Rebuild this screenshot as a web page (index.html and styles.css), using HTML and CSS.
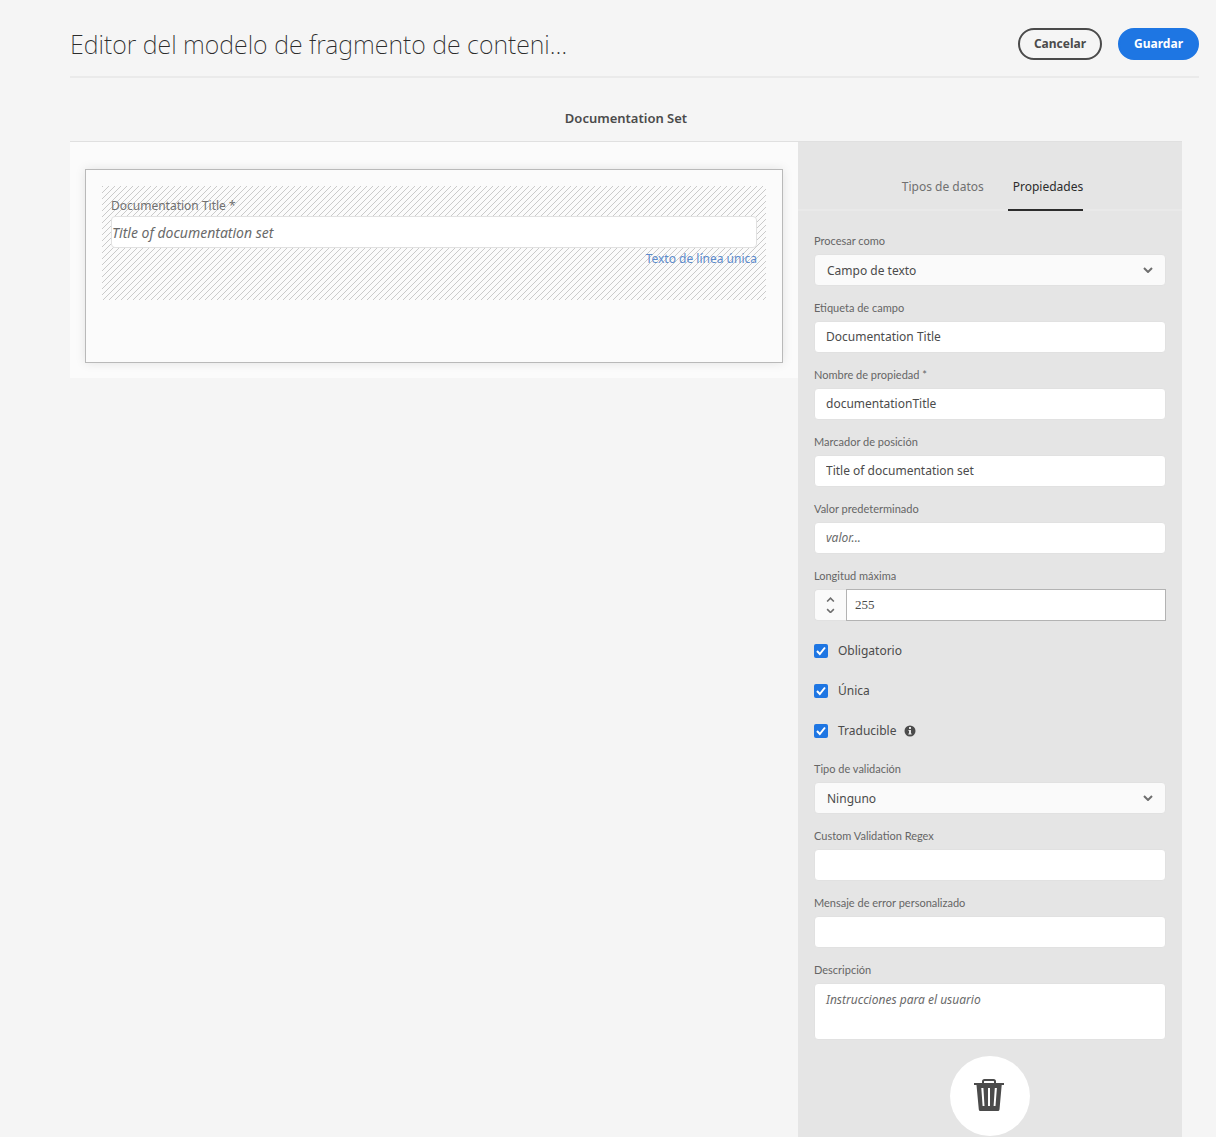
FILE: index.html
```html
<!DOCTYPE html>
<html lang="es">
<head>
<meta charset="utf-8">
<meta name="viewport" content="width=device-width, initial-scale=1">
<title>Editor del modelo de fragmento de contenido</title>
<link rel="stylesheet" href="styles.css">
</head>
<body>
<header class="topbar">
  <h1 class="topbar-title">Editor del modelo de fragmento de conteni…</h1>
  <div class="topbar-actions">
    <button class="btn btn-outline" type="button">Cancelar</button>
    <button class="btn btn-primary" type="submit" form="properties">Guardar</button>
  </div>
</header>
<main class="editor">
  <h2 class="model-name">Documentation Set</h2>
  <div class="columns">
    <section class="preview">
      <div class="dropzone">
        <div class="model-field">
          <label class="model-label" for="preview-title">Documentation Title *</label>
          <input class="model-input" id="preview-title" type="text" placeholder="Title of documentation set">
          <a class="model-type" href="#properties">Texto de línea única</a>
        </div>
      </div>
    </section>
    <aside class="panel">
      <div class="tabs" role="tablist">
        <button class="tab" type="button" role="tab" aria-selected="false">Tipos de datos</button>
        <button class="tab tab-active" type="button" role="tab" aria-selected="true">Propiedades</button>
      </div>
      <form class="properties" id="properties">
        <div class="field">
          <label for="render-as">Procesar como</label>
          <div class="select-box">
            <select class="control select" id="render-as"><option>Campo de texto</option></select>
            <svg class="chevron" viewBox="0 0 10 6" aria-hidden="true"><path d="M1 1l4 4 4-4"/></svg>
          </div>
        </div>
        <div class="field">
          <label for="field-label">Etiqueta de campo</label>
          <input class="control" id="field-label" type="text" value="Documentation Title">
        </div>
        <div class="field">
          <label for="property-name">Nombre de propiedad *</label>
          <input class="control" id="property-name" type="text" value="documentationTitle">
        </div>
        <div class="field">
          <label for="placeholder">Marcador de posición</label>
          <input class="control" id="placeholder" type="text" value="Title of documentation set">
        </div>
        <div class="field">
          <label for="default-value">Valor predeterminado</label>
          <input class="control" id="default-value" type="text" placeholder="valor...">
        </div>
        <div class="field">
          <label for="max-length">Longitud máxima</label>
          <div class="stepper">
            <div class="stepper-buttons">
              <button class="step" type="button" aria-label="Aumentar"><svg viewBox="0 0 8 5" aria-hidden="true"><path d="M1 4l3-3 3 3"/></svg></button>
              <button class="step" type="button" aria-label="Reducir"><svg viewBox="0 0 8 5" aria-hidden="true"><path d="M1 1l3 3 3-3"/></svg></button>
            </div>
            <input class="stepper-input" id="max-length" type="number" value="255">
          </div>
        </div>
        <div class="checks">
          <label class="check"><input type="checkbox" checked>Obligatorio</label>
          <label class="check"><input type="checkbox" checked>Única</label>
          <div class="check">
            <label class="check"><input type="checkbox" checked>Traducible</label>
            <svg class="info" viewBox="0 0 12 12" aria-hidden="true"><circle cx="6" cy="6" r="5.5"/><path d="M5 2h2v2H5zM4.500 5H7v3.500h.7v1H4.300v-1H5V6h-.5z"/></svg>
          </div>
        </div>
        <div class="field">
          <label for="validation-type">Tipo de validación</label>
          <div class="select-box">
            <select class="control select" id="validation-type"><option>Ninguno</option></select>
            <svg class="chevron" viewBox="0 0 10 6" aria-hidden="true"><path d="M1 1l4 4 4-4"/></svg>
          </div>
        </div>
        <div class="field">
          <label for="regex">Custom Validation Regex</label>
          <input class="control" id="regex" type="text">
        </div>
        <div class="field">
          <label for="error-message">Mensaje de error personalizado</label>
          <input class="control" id="error-message" type="text">
        </div>
        <div class="field">
          <label for="description">Descripción</label>
          <textarea class="control textarea" id="description" placeholder="Instrucciones para el usuario"></textarea>
        </div>
        <button class="delete" type="button" aria-label="Eliminar">
          <svg viewBox="0 0 30 32" aria-hidden="true"><path class="trash-handle" d="M9 4V2.500Q9 1 10.500 1h9Q21 1 21 2.500V4"/><path class="trash-can" fill-rule="evenodd" d="M0 4h30v2h-2.300l-2.200 24.500Q25.300 32 24 32H6.200Q5 32 4.800 30.500L2.500 6H0zM7.300 9l1.300 18h1.900L9.400 9zM14 9v18h2V9zM20.800 9l-1.200 18h1.900l1.400-18z"/></svg>
        </button>
      </form>
    </aside>
  </div>
</main>
</body>
</html>
```
FILE: styles.css
```css
* { box-sizing: border-box; }

body {
  display: flex;
  flex-direction: column;
  min-height: 100vh;
  margin: 0;
  background: #f5f5f5;
  color: #4b4b4b;
  font: 13px/20px "Noto Sans", "Open Sans", sans-serif;
}

button, input, select, textarea {
  margin: 0;
  font: inherit;
  color: inherit;
}

button { cursor: pointer; }

.topbar {
  display: flex;
  justify-content: space-between;
  align-items: center;
  gap: 16px;
  margin: 0 17px 0 70px;
  padding: 24px 0 12px;
  border-bottom: 2px solid #eaeaea;
}

.topbar-title {
  min-width: 0;
  margin: 0;
  color: #2c2c2c;
  font-size: 25px;
  font-weight: 200;
  line-height: 40px;
}

.topbar-actions {
  display: flex;
  flex-shrink: 0;
  gap: 16px;
}

.btn {
  height: 32px;
  padding: 0 14px;
  border: 2px solid #4b4b4b;
  border-radius: 16px;
  background: none;
  font-size: 12px;
  font-weight: 700;
}

.btn-primary {
  border-color: #1e76e3;
  background: #1e76e3;
  color: #fff;
}

.editor {
  display: flex;
  flex: 1;
  flex-direction: column;
  margin: 16px 34px 0 70px;
}

.model-name {
  margin: 0;
  padding: 14px 0 13px;
  border-bottom: 1px solid #e0e0e0;
  font-size: 13px;
  font-weight: 600;
  line-height: 20px;
  text-align: center;
}

.columns {
  display: grid;
  flex: 1;
  grid-template-columns: minmax(0, 1fr) 384px;
}

.preview {
  align-self: start;
  padding: 27px 15px 15px;
  background: #fbfbfb;
}

.dropzone {
  padding: 16px 16px 62px;
  border: 1px solid #b9b9b9;
  box-shadow: 0 0 10px rgba(0, 0, 0, 0.1);
}

.model-field {
  display: flex;
  flex-direction: column;
  padding: 10px 9px 31px;
  background: linear-gradient(135deg, transparent 46%, #cacaca 46%, #cacaca 54%, transparent 54%) 1px 0 / 6px 6px;
}

.model-label {
  color: #707070;
  font-size: 12px;
}

.model-input {
  width: 100%;
  height: 32px;
  padding: 0;
  border: 1px solid #e1e1e1;
  border-radius: 4px;
  background: #fff;
  font-size: 14px;
}

.model-type {
  align-self: flex-end;
  margin-top: 1px;
  color: #5c8acb;
  font-size: 12px;
  text-decoration: none;
}

::placeholder {
  color: #6a6a6a;
  font-style: italic;
  opacity: 1;
}

.panel { background: #e5e5e5; }

.tabs {
  display: flex;
  justify-content: center;
  gap: 24px;
  padding: 22px 0 0 5px;
  box-shadow: inset 0 -2px #e9e9e9;
}

.tab {
  padding: 13px 0 12px;
  border: 0;
  border-bottom: 2px solid transparent;
  background: none;
  color: #707070;
  font-size: 12px;
}

.tab-active {
  padding-left: 5px;
  border-color: #2c2c2c;
  color: #2c2c2c;
}

.properties {
  display: flex;
  flex-direction: column;
  gap: 12px;
  padding: 20px 16px 0;
}

.field {
  display: flex;
  flex-direction: column;
  gap: 3px;
  color: #666;
  font-size: 11px;
}

.field > label { font-family: Lato, "Noto Sans", sans-serif; }

.control {
  width: 100%;
  height: 32px;
  padding: 0 11px 2px;
  border: 1px solid #e1e1e1;
  border-radius: 4px;
  background: #fff;
  color: #4b4b4b;
  font-size: 12px;
}

.select-box { display: grid; align-items: center; }

.select-box > * { grid-area: 1 / 1; }

.select {
  padding: 2px 12px 0;
  appearance: none;
  background: #fafafa;
}

.chevron {
  justify-self: end;
  width: 10px;
  margin-right: 13px;
  fill: none;
  stroke: #6e6e6e;
  stroke-width: 2;
  pointer-events: none;
}

.stepper { display: flex; height: 32px; }

.stepper-buttons {
  display: flex;
  flex-direction: column;
  width: 32px;
  padding: 4px 0;
  border: 1px solid #e1e1e1;
  border-right: 0;
  border-radius: 4px 0 0 4px;
  background: #fafafa;
}

.step {
  display: grid;
  flex: 1;
  place-items: center;
  padding: 0;
  border: 0;
  background: none;
}

.step svg {
  width: 9px;
  fill: none;
  stroke: #6e6e6e;
  stroke-width: 1.4;
}

.stepper-input {
  flex: 1;
  min-width: 0;
  padding: 0 8px;
  border: 1px solid #b3b3b3;
  appearance: textfield;
  background: #fff;
  color: #4b4b4b;
  font-family: "Liberation Serif", serif;
  font-size: 13px;
}

.stepper-input::-webkit-inner-spin-button { appearance: none; }

.checks {
  display: flex;
  flex-direction: column;
  gap: 12px;
  padding: 4px 0 2px;
}

.check {
  display: flex;
  align-items: center;
  gap: 10px;
  min-height: 28px;
  font-size: 12px;
}

div.check { gap: 8px; }

.check input {
  width: 14px;
  height: 14px;
  appearance: none;
  border-radius: 2px;
  background: #fff;
}

.check input:checked {
  background: #1e76e3 url("data:image/svg+xml,%3Csvg xmlns='http://www.w3.org/2000/svg' viewBox='0 0 14 14'%3E%3Cpath d='M3 7l2.800 3L11 3.500' fill='none' stroke='%23fff' stroke-width='2'/%3E%3C/svg%3E");
}

.info {
  width: 12px;
  fill: #4b4b4b;
}

.info path { fill: #e5e5e5; }

.textarea {
  height: 57px;
  padding: 6px 11px;
  resize: none;
}

.delete {
  display: grid;
  align-self: center;
  place-items: center;
  width: 80px;
  height: 80px;
  margin-top: 4px;
  padding: 0 2px 2px 0;
  border: 0;
  border-radius: 50%;
  background: #fff;
}

.delete svg { width: 30px; fill: #4b4b4b; }

.delete .trash-handle {
  fill: none;
  stroke: #4b4b4b;
  stroke-width: 2;
}
```
